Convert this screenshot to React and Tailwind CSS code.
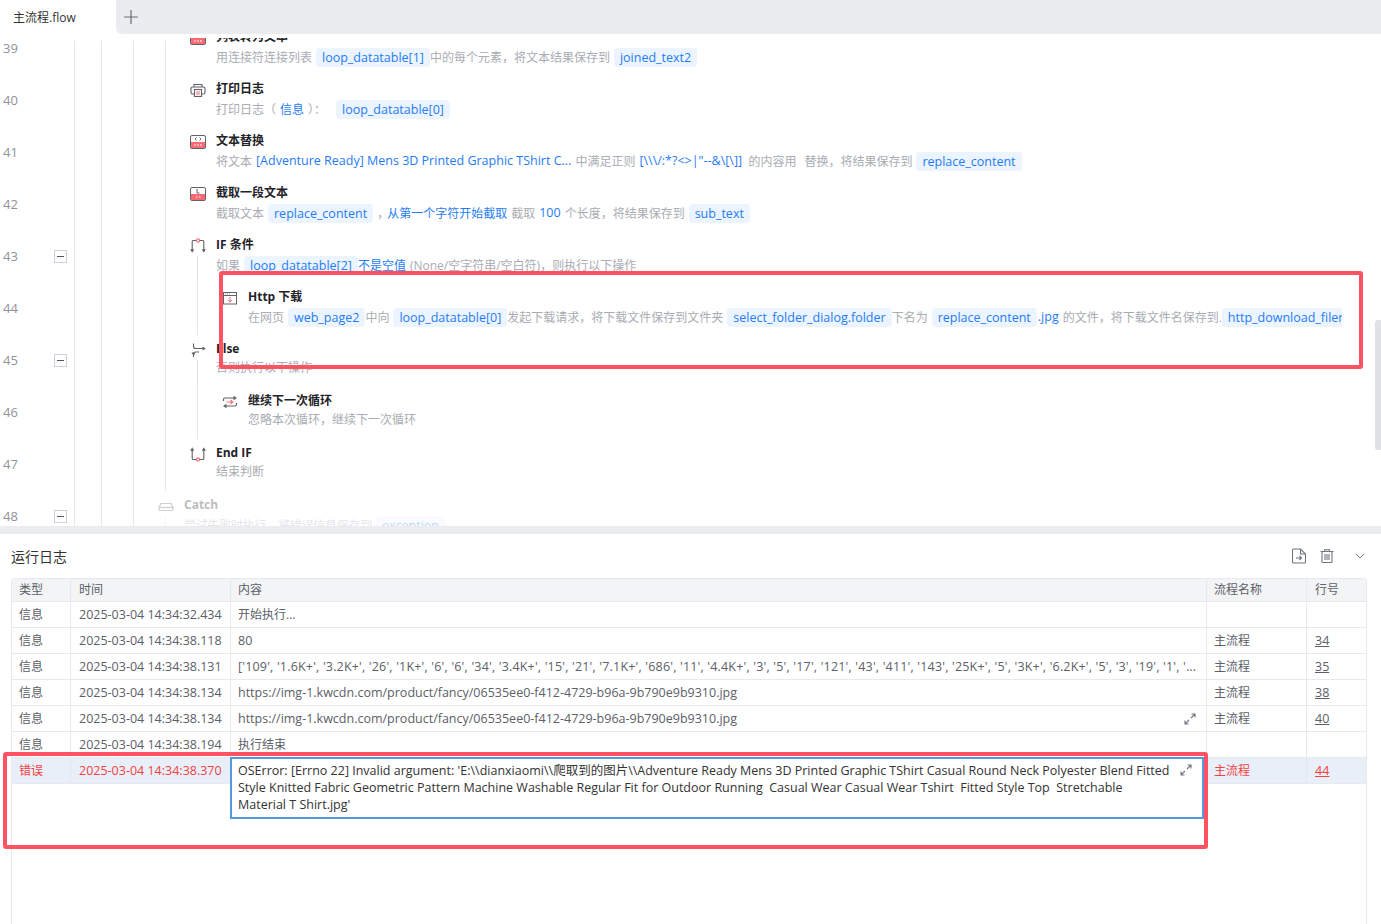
import { Plus, ChevronDown } from "lucide-react";

const gray = "#5f6268";
const red = "#fb6a72";

function Chip({ children, className = "" }) {
  return <span className={`h-[19px] px-[6px] leading-[19px] rounded-[4px] bg-[#ecf4ff] text-[12.5px] text-[#1f7cf8] shrink-0 ${className}`}>{children}</span>;
}
function B({ children, className = "" }) {
  return <span className={`text-[12.5px] text-[#1f7cf8] shrink-0 ${className}`}>{children}</span>;
}
function BC({ children, className = "" }) {
  return <span className={`text-[#1f7cf8] shrink-0 ${className}`}>{children}</span>;
}
function G({ children, className = "" }) {
  return <span className={`shrink-0 ${className}`}>{children}</span>;
}

function IconBox({ children }) {
  return (
    <svg width="16" height="16" viewBox="0 0 16 16" fill="none">
      <rect x="0.5" y="1.5" width="15" height="13" rx="1.5" fill="#fff" stroke={gray} />
      <rect x="1" y="8" width="14" height="6" fill={red} />
      {children}
    </svg>
  );
}

const icons = {
  box: <IconBox><path d="M4 11h2M7 11h2M10 11h2" stroke="#fff" /></IconBox>,
  print: (
    <svg width="16" height="16" viewBox="0 0 16 16" fill="none" stroke={gray} strokeWidth="1.1">
      <path d="M4 5V2.5h8V5M4 12H2.5A1.5 1.5 0 0 1 1 10.5V6.5A1.5 1.5 0 0 1 2.5 5h11A1.5 1.5 0 0 1 15 6.5v4a1.5 1.5 0 0 1-1.5 1.5H12" />
      <rect x="4.5" y="7.5" width="7" height="7" fill="#fff" />
      <path d="M6 10h4M6 12h4" stroke={red} />
    </svg>
  ),
  replace: (
    <IconBox>
      <path d="M6.5 3.5 5 5l1.5 1.5M9.5 3.5 11 5 9.5 6.5" stroke={gray} strokeWidth="0.9" />
      <path d="M4 11h2M7 11h2M10 11h2" stroke="#fff" />
    </IconBox>
  ),
  cut: (
    <IconBox>
      <path d="M7 3v4h2.5" stroke={gray} strokeWidth="1" />
      <path d="M6 11h1.5M9 11h1.5" stroke="#fff" />
    </IconBox>
  ),
  ifs: (
    <svg width="16" height="16" viewBox="0 0 16 16" fill="none" stroke={gray} strokeWidth="1.1">
      <path d="M6.2 2.5H3.2a1 1 0 0 0-1 1V12M9.8 2.5h3a1 1 0 0 1 1 1V12" />
      <path d="M0.2 11.2h4L2.2 14.8zM11.8 11.2h4l-2 3.6z" fill={gray} stroke="none" />
      <circle cx="8" cy="2.5" r="1.6" stroke={red} fill="#fff" />
    </svg>
  ),
  elses: (
    <svg width="16" height="16" viewBox="0 0 16 16" fill="none" stroke={gray} strokeWidth="1.1">
      <path d="M3.5 1.5v3a2 2 0 0 0 2 2H14M3.5 15v-3a2 2 0 0 1 2-2H9" />
      <path d="M12.5 4.5 15.8 6.5l-3.3 2zM1.5 10.5h4L3.5 14z" fill={gray} stroke="none" />
    </svg>
  ),
  http: (
    <svg width="16" height="16" viewBox="0 0 16 16" fill="none" stroke={gray} strokeWidth="1">
      <rect x="1.5" y="2.5" width="13" height="11.5" />
      <path d="M1.5 5.5h13" />
      <path d="M3 4h1M5 4h1M7 4h1" strokeWidth="0.8" />
      <path d="M8 7v5M5.8 10 8 12.2 10.2 10" stroke={red} />
    </svg>
  ),
  next: (
    <svg width="16" height="16" viewBox="0 0 16 16" fill="none" stroke={gray} strokeWidth="1.2">
      <path d="M1.5 7V5.5a1.5 1.5 0 0 1 1.5-1.5h10M14.5 9v1.5A1.5 1.5 0 0 1 13 12H3" />
      <path d="M11.5 1.8 15 4l-3.5 2.2zM4.5 9.8 1 12l3.5 2.2z" fill={gray} stroke="none" />
      <path d="M4.5 8h6M8.5 6l2.2 2-2.2 2" stroke={red} />
    </svg>
  ),
  endif: (
    <svg width="16" height="16" viewBox="0 0 16 16" fill="none" stroke={gray} strokeWidth="1.1">
      <path d="M6.2 13.5H3.2a1 1 0 0 1-1-1V4M9.8 13.5h3a1 1 0 0 0 1-1V4" />
      <path d="M0.2 4.8h4L2.2 1.2zM11.8 4.8h4l-2-3.6z" fill={gray} stroke="none" />
      <circle cx="8" cy="13.5" r="1.6" stroke={red} fill="#fff" />
    </svg>
  ),
  catchs: (
    <svg width="16" height="16" viewBox="0 0 16 16" fill="none" stroke={gray} strokeWidth="1.2">
      <path d="M1 9.5 3 5.5h10l2 4v2a1 1 0 0 1-1 1H2a1 1 0 0 1-1-1z" />
      <path d="M1 9.5h14" />
    </svg>
  ),
};

function Row({ n, fold, depth = 2, icon, title, line, faded, clip, children }) {
  const guides = depth === 3 ? [0, 1, 2] : depth === 2 ? [0, 1] : [0];
  return (
    <div className="flex h-[52px] shrink-0">
      <div className="w-[75px] shrink-0 border-r border-[#e8e9ed] flex items-center pl-[3px] text-[13px] text-[#8f9298]">
        {n}
        {fold && (
          <span className="ml-auto mr-[7px] mb-[2px] w-[13px] h-[13px] border border-[#cfd1d6] flex items-center justify-center">
            <span className="w-[7px] h-px bg-[#55585e]" />
          </span>
        )}
      </div>
      <div className="w-[27px] shrink-0 border-r border-[#e8e9ed]" />
      {guides.map((g) => (
        <div key={g} className="w-[32px] shrink-0 border-r border-[#e8e9ed]" />
      ))}
      <div className={`flex flex-1 min-w-0 pl-[24px] ${faded ? "opacity-30" : ""}`}>
        <div className="w-4 shrink-0 flex flex-col items-center pt-[7px]">
          {icons[icon]}
          {line && <div className="w-px flex-1 mt-[2px] bg-[#e0e1e5] -translate-x-px" />}
        </div>
        <div className="ml-[10px] flex-1 min-w-0 pt-[6px]">
          <div className="h-4 leading-4 text-[12px] font-bold text-[#1f2329] whitespace-nowrap">{title}</div>
          <div className={`mt-[3px] h-[19px] flex items-center gap-[4px] text-[12px] text-[#a9acb3] whitespace-nowrap overflow-hidden ${clip ? "w-[1094px]" : ""}`}>
            {children}
          </div>
        </div>
      </div>
    </div>
  );
}

const logs = [
  { text: "开始执行...", cjk: true, time: "2025-03-04 14:34:32.434", flow: "", line: "" },
  { text: "80", time: "2025-03-04 14:34:38.118", flow: "主流程", line: "34" },
  {
    text: "['109', '1.6K+', '3.2K+', '26', '1K+', '6', '6', '34', '3.4K+', '15', '21', '7.1K+', '686', '11', '4.4K+', '3', '5', '17', '121', '43', '411', '143', '25K+', '5', '3K+', '6.2K+', '5', '3', '19', '1', '...",
    wide: true,
    time: "2025-03-04 14:34:38.131",
    flow: "主流程",
    line: "35",
  },
  { text: "https://img-1.kwcdn.com/product/fancy/06535ee0-f412-4729-b96a-9b790e9b9310.jpg", time: "2025-03-04 14:34:38.134", flow: "主流程", line: "38" },
  { text: "https://img-1.kwcdn.com/product/fancy/06535ee0-f412-4729-b96a-9b790e9b9310.jpg", time: "2025-03-04 14:34:38.134", flow: "主流程", line: "40", expand: true },
  { text: "执行结束", cjk: true, time: "2025-03-04 14:34:38.194", flow: "", line: "" },
];

const cols = "grid grid-cols-[59px_160px_976px_100px_59px]";

function Expand({ className = "" }) {
  return (
    <svg width="12" height="12" viewBox="0 0 12 12" fill="none" stroke="#6f7680" strokeWidth="1.1" className={className}>
      <path d="M7 5 11 1M7.5 1H11v3.5M5 7 1 11M1 7.5V11h3.5" />
    </svg>
  );
}

export default function App() {
  return (
    <div className="relative w-[1381px] h-[924px] overflow-hidden bg-white flex flex-col font-['Open_Sans','Noto_Sans_CJK_SC',sans-serif]">
      {/* tabs */}
      <div className="h-[34px] shrink-0 flex bg-white">
        <div className="w-[116px] rounded-t-[6px] bg-white pl-[13px] leading-[36px] text-[12px] text-[#333]">主流程.flow</div>
        <div className="flex-1 bg-[#ebecf0] rounded-bl-[6px] flex items-center pl-[4px]">
          <Plus size={22} strokeWidth={1.3} color="#666a70" />
        </div>
      </div>

      {/* flow editor */}
      <div className="h-[492px] shrink-0 pt-[4px]">
        <div className="h-[488px] overflow-hidden">
          <div className="-mt-[15px] flex flex-col">
            <Row n="39" icon="box" title="列表转为文本">
              <G>用连接符连接列表</G><Chip>loop_datatable[1]</Chip><G className="-ml-[4px]">中的每个元素，将文本结果保存到</G><Chip>joined_text2</Chip>
            </Row>
            <Row n="40" icon="print" title="打印日志">
              <G>打印日志（</G><BC>信息</BC><G className="w-[24px]">）：</G><Chip>loop_datatable[0]</Chip>
            </Row>
            <Row n="41" icon="replace" title="文本替换">
              <G>将文本</G><B>[Adventure Ready] Mens 3D Printed Graphic TShirt C...</B><G>中满足正则</G><B className="w-[105px]">{"[\\\\\\/:*?<>|\"--&\\[\\]]"}</B><G>的内容用</G><G className="ml-[4px]">替换，将结果保存到</G><Chip>replace_content</Chip>
            </Row>
            <Row n="42" icon="cut" title="截取一段文本">
              <G>截取文本</G><Chip>replace_content</Chip><G className="w-[6px]">，</G><BC>从第一个字符开始截取</BC><G>截取</G><B>100</B><G>个长度，将结果保存到</G><Chip>sub_text</Chip>
            </Row>
            <Row n="43" fold icon="ifs" title="IF 条件" line>
              <G>如果</G><Chip>loop_datatable[2]</Chip><BC className="-ml-[4px]">不是空值</BC><G>(None/空字符串/空白符)，则执行以下操作</G>
            </Row>
            <Row n="44" depth={3} icon="http" title="Http 下载" clip>
              <G>在网页</G><Chip>web_page2</Chip><G className="-ml-[4px]">中向</G><Chip>loop_datatable[0]</Chip><G className="-ml-[4px]">发起下载请求，将下载文件保存到文件夹</G><Chip>select_folder_dialog.folder</Chip><G className="-ml-[4px]">下名为</G><Chip>replace_content</Chip><B className="-ml-[3px]">.jpg</B><G>的文件，将下载文件名保存到.</G><Chip className="-ml-[4px]">http_download_filename</Chip>
            </Row>
            <Row n="45" fold icon="elses" title="Else" line>
              <G className="mb-[4px]">否则执行以下操作</G>
            </Row>
            <Row n="46" depth={3} icon="next" title="继续下一次循环">
              <G className="mb-[4px]">忽略本次循环，继续下一次循环</G>
            </Row>
            <Row n="47" icon="endif" title="End IF">
              <G className="mb-[4px]">结束判断</G>
            </Row>
            <Row n="48" fold depth={1} icon="catchs" title="Catch" line faded>
              <G className="tracking-[-0.25px]">尝试失败时执行，将错误信息保存到</G><Chip>exception</Chip>
            </Row>
          </div>
        </div>
      </div>

      <div className="h-2 shrink-0 bg-[#ebecf0]" />

      {/* run log */}
      <div className="flex-1 flex flex-col min-h-0 px-[11px] rounded-t-[6px]">
        <div className="h-[44px] shrink-0 flex items-center text-[14px] text-[#333]">
          <span>运行日志</span>
          <div className="ml-auto flex items-center text-[#6f7680] mr-[3px]">
            <svg width="14" height="16" viewBox="0 0 14 16" fill="none" stroke="currentColor" strokeWidth="1.1">
              <path d="M8.5 1H1.5a1 1 0 0 0-1 1v12a1 1 0 0 0 1 1h11a1 1 0 0 0 1-1V6z" />
              <path d="M8.5 1v5h5M4 10h5.5M7.5 8l2 2-2 2" />
            </svg>
            <svg width="14" height="14" viewBox="0 0 14 14" fill="none" stroke="currentColor" strokeWidth="1.1" className="ml-[14px]">
              <path d="M0.5 2.5h13M4.5 2.5V.8h5v1.7M2 2.5V12.5a1 1 0 0 0 1 1h8a1 1 0 0 0 1-1V2.5M5 5v6M7 5v6M9 5v6" />
            </svg>
            <ChevronDown size={16} strokeWidth={1.2} color="#5f6670" className="ml-[18px] -mr-[1px]" />
          </div>
        </div>
        <div className="flex-1 w-[1356px] border-x border-t border-[#e8e9ee] rounded-t-[3px] text-[12.5px] text-[#5c6068]">
          <div className={`${cols} h-[23px] leading-[22px] text-[12px] bg-[#f3f4f6] border-b border-[#e8e9ee]`}>
            <div className="pl-[7px] border-r border-[#e8e9ee]">类型</div>
            <div className="pl-[8px] border-r border-[#e8e9ee]">时间</div>
            <div className="pl-[7px] border-r border-[#e8e9ee]">内容</div>
            <div className="pl-[7px] border-r border-[#e8e9ee]">流程名称</div>
            <div className="pl-[8px]">行号</div>
          </div>
          {logs.map((r, i) => (
            <div key={i} className={`${cols} h-[26px] leading-[25px] border-b border-[#e8e9ee]`}>
              <div className="pl-[7px] text-[12px] border-r border-[#e8e9ee]">信息</div>
              <div className="pl-[8px] border-r border-[#e8e9ee]">{r.time}</div>
              <div className={`pl-[7px] pr-[4px] border-r border-[#e8e9ee] whitespace-nowrap overflow-hidden relative ${r.cjk ? "text-[12px]" : ""} ${r.wide ? "tracking-[0.18px]" : ""}`}>
                {r.text}
                {r.expand && <Expand className="absolute right-[10px] top-[7px]" />}
              </div>
              <div className="pl-[7px] text-[12px] border-r border-[#e8e9ee]">{r.flow}</div>
              <div className="pl-[8px] underline">{r.line}</div>
            </div>
          ))}
          <div className={`${cols} h-[26px] leading-[25px] bg-[#e8eff8] text-[#f5413f] border-b border-[#e8e9ee]`}>
            <div className="pl-[7px] text-[12px] border-r border-[#e3e8ef]">错误</div>
            <div className="pl-[8px] border-r border-[#e3e8ef]">2025-03-04 14:34:38.370</div>
            <div className="relative">
              <div className="absolute -left-px -top-px w-[974px] h-[62px] bg-white border-2 border-[#5398e0] pl-[6px] pr-[30px] pt-[3px] leading-[17px] text-[#333] whitespace-pre-wrap">
                {"OSError: [Errno 22] Invalid argument: 'E:\\\\dianxiaomi\\\\爬取到的图片\\\\Adventure Ready Mens 3D Printed Graphic TShirt Casual Round Neck Polyester Blend Fitted Style Knitted Fabric Geometric Pattern Machine Washable Regular Fit for Outdoor Running  Casual Wear Casual Wear Tshirt  Fitted Style Top  Stretchable Material T Shirt.jpg'"}
                <Expand className="absolute right-[10px] top-[5px]" />
              </div>
            </div>
            <div className="pl-[7px] text-[12px] border-r border-[#e3e8ef]">主流程</div>
            <div className="pl-[8px] underline">44</div>
          </div>
        </div>
      </div>

      {/* hides the guide lines above the first row */}
      <div className="absolute left-0 top-[34px] w-[170px] h-[7px] bg-white" />
      {/* scrollbar */}
      <div className="absolute left-[1375px] top-[320px] w-[6px] h-[130px] rounded-l-[3px] bg-[#e0e1e6]" />
      {/* annotation boxes */}
      <div className="absolute left-[219px] top-[271px] w-[1144px] h-[98px] border-[4px] border-[#ff5263] rounded-[3px] pointer-events-none" />
      <div className="absolute left-[3px] top-[752px] w-[1205px] h-[97px] border-[4px] border-[#ff5263] rounded-[3px] pointer-events-none" />
    </div>
  );
}
